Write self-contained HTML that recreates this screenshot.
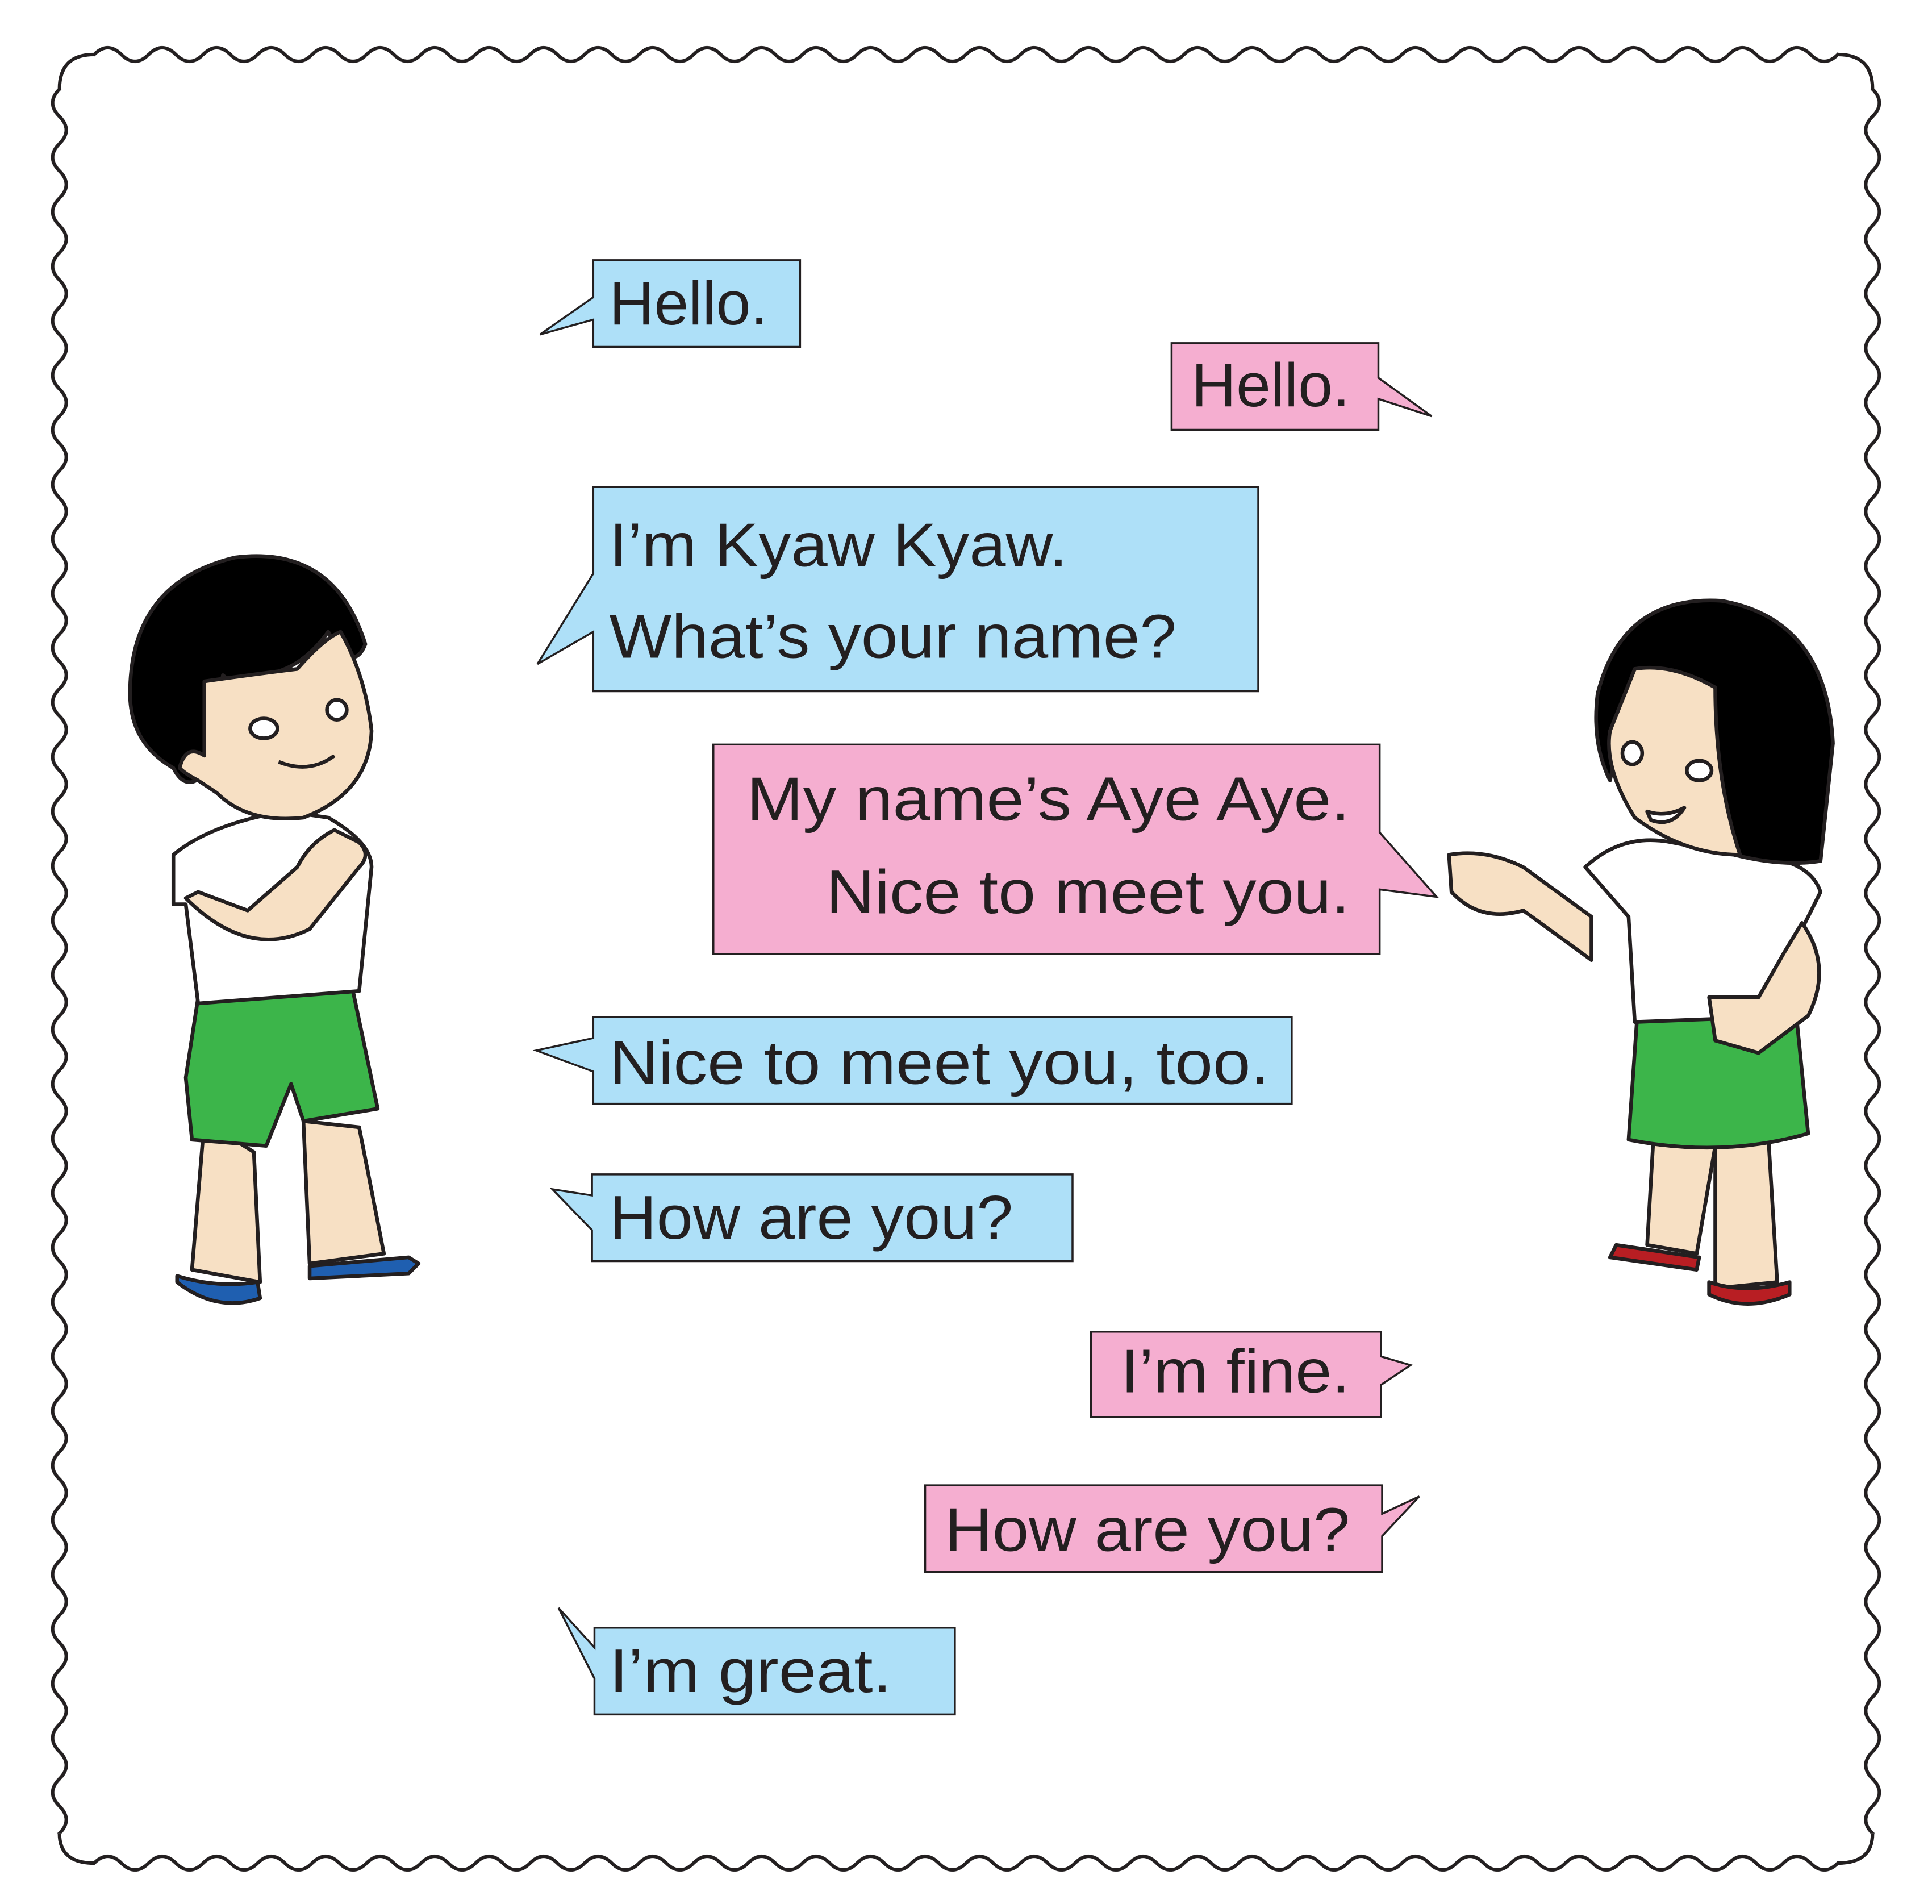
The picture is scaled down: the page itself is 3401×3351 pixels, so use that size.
<!DOCTYPE html>
<html><head><meta charset="utf-8"><style>
html,body{margin:0;padding:0;background:#fff}
svg{display:block}
text{font-family:"Liberation Sans",sans-serif;font-size:50px;fill:#231f20}
</style></head><body>
<svg width="3401" height="3351" viewBox="0 0 1560 1537" preserveAspectRatio="none" xmlns="http://www.w3.org/2000/svg">
<defs>
<pattern id="wh" patternUnits="userSpaceOnUse" x="76" y="34" width="44" height="20">
<path d="M-1,10.5 L0,10 q11,-11 22,0 t22,0 l1,0.5" fill="none" stroke="#231f20" stroke-width="2.8"/>
</pattern>
<pattern id="wl" patternUnits="userSpaceOnUse" x="38" y="72" width="20" height="44">
<path d="M10.5,-1 L10,0 q-11,11 0,22 t0,22 l0.5,1" fill="none" stroke="#231f20" stroke-width="2.8"/>
</pattern>
<pattern id="wr" patternUnits="userSpaceOnUse" x="1502" y="72" width="20" height="44">
<path d="M9.5,-1 L10,0 q11,11 0,22 t0,22 l-0.5,1" fill="none" stroke="#231f20" stroke-width="2.8"/>
</pattern>
</defs>
<rect width="1560" height="1537" fill="#fff"/>
<rect x="76" y="34" width="1408" height="20" fill="url(#wh)"/>
<rect x="76" y="1494" width="1408" height="20" fill="url(#wh)"/>
<rect x="38" y="72" width="20" height="1408" fill="url(#wl)"/>
<rect x="1502" y="72" width="20" height="1408" fill="url(#wr)"/>
<g fill="none" stroke="#231f20" stroke-width="2.8">
<path d="M48,72 Q48,44 76,44"/>
<path d="M1484,44 Q1512,44 1512,72"/>
<path d="M1512,1480 Q1512,1504 1484,1504"/>
<path d="M76,1504 Q48,1504 48,1480"/>
</g>

<g stroke="#231f20" stroke-width="1.6" stroke-linejoin="miter">
<polygon fill="#aee0f8" points="479,210 646,210 646,280 479,280 479,258 436,270 479,240"/>
<polygon fill="#f5aed0" points="946,277 1113,277 1113,305 1156,336 1113,322 1113,347 946,347"/>
<polygon fill="#aee0f8" points="479,393 1016,393 1016,558 479,558 479,510 434,536 479,463"/>
<polygon fill="#f5aed0" points="576,601 1114,601 1114,672 1160,724 1114,718 1114,770 576,770"/>
<polygon fill="#aee0f8" points="479,821 1043,821 1043,891 479,891 479,865 433,848 479,838"/>
<polygon fill="#aee0f8" points="478,948 866,948 866,1018 478,1018 478,993 446,960 478,965"/>
<polygon fill="#f5aed0" points="881,1075 1115,1075 1115,1095 1139,1102 1115,1118 1115,1144 881,1144"/>
<polygon fill="#f5aed0" points="747,1199 1116,1199 1116,1222 1146,1208 1116,1240 1116,1269 747,1269"/>
<polygon fill="#aee0f8" points="480,1314 771,1314 771,1384 480,1384 480,1355 451,1298 480,1330"/>
</g>

<g>
<text x="492" y="262" textLength="128" lengthAdjust="spacingAndGlyphs">Hello.</text>
<text x="962" y="328" textLength="128" lengthAdjust="spacingAndGlyphs">Hello.</text>
<text x="492" y="457" textLength="370" lengthAdjust="spacingAndGlyphs">I’m Kyaw Kyaw.</text>
<text x="492" y="531" textLength="458" lengthAdjust="spacingAndGlyphs">What’s your name?</text>
<text x="603" y="662" textLength="487" lengthAdjust="spacingAndGlyphs">My name’s Aye Aye.</text>
<text x="667" y="737" textLength="423" lengthAdjust="spacingAndGlyphs">Nice to meet you.</text>
<text x="492" y="875" textLength="533" lengthAdjust="spacingAndGlyphs">Nice to meet you, too.</text>
<text x="492" y="1000" textLength="326" lengthAdjust="spacingAndGlyphs">How are you?</text>
<text x="905" y="1124" textLength="185" lengthAdjust="spacingAndGlyphs">I’m fine.</text>
<text x="763" y="1252" textLength="327" lengthAdjust="spacingAndGlyphs">How are you?</text>
<text x="492" y="1366" textLength="228" lengthAdjust="spacingAndGlyphs">I’m great.</text>
</g>

<!-- Boy -->
<g stroke="#231f20" stroke-width="3" stroke-linejoin="round">
<path fill="#f7e0c4" d="M165,905 L155,1025 L210,1035 L205,930 Z"/>
<path fill="#f7e0c4" d="M245,905 L250,1020 L310,1012 L290,910 Z"/>
<path fill="#1f5fb0" d="M143,1035 Q175,1060 210,1048 L208,1035 Q175,1040 143,1030 Z"/>
<path fill="#1f5fb0" d="M250,1032 L330,1028 L338,1020 L330,1015 L250,1022 Z"/>
<path fill="#3cb54a" d="M160,805 L285,800 L305,895 L245,905 L235,875 L215,925 L155,920 L150,870 Z"/>
<path fill="#fff" d="M140,690 Q170,665 230,655 L265,660 Q300,680 300,700 L290,800 L160,810 L150,730 L140,730 Z"/>
<path fill="#f7e0c4" d="M150,725 Q200,775 250,750 L290,700 Q300,690 290,680 L270,670 Q250,680 240,700 L200,735 L160,720 Z"/>
<path fill="#000" d="M105,560 Q105,470 190,450 Q270,440 295,520 Q285,545 265,510 Q240,545 205,545 Q195,560 180,545 L165,625 Q150,640 140,620 Q105,600 105,560 Z"/>
<path fill="#f7e0c4" d="M165,550 Q200,545 240,540 Q262,515 275,510 Q295,545 300,590 Q298,640 245,660 Q200,665 175,640 L160,630 Q150,625 145,620 Q150,600 165,610 Z"/>
<ellipse cx="213" cy="588" rx="11" ry="8" fill="#fff"/>
<ellipse cx="272" cy="573" rx="8" ry="8" fill="#fff"/>
<path fill="none" d="M225,615 Q250,625 270,610"/>
</g>

<!-- Girl -->
<g stroke="#231f20" stroke-width="3" stroke-linejoin="round">
<path fill="#f7e0c4" d="M1335,920 L1330,1005 L1370,1012 L1385,925 Z"/>
<path fill="#f7e0c4" d="M1385,925 L1385,1040 L1435,1035 L1428,920 Z"/>
<path fill="#b81e23" d="M1300,1015 L1370,1025 L1372,1015 L1305,1005 Z"/>
<path fill="#b81e23" d="M1380,1045 Q1410,1060 1445,1045 L1445,1035 Q1410,1045 1380,1035 Z"/>
<path fill="#3cb54a" d="M1322,820 L1450,815 L1460,915 Q1390,935 1315,920 Z"/>
<path fill="#fff" d="M1280,700 Q1310,672 1350,680 L1400,690 Q1460,690 1470,720 L1455,750 L1450,820 L1320,825 L1315,740 Z"/>
<path fill="#f7e0c4" d="M1170,690 Q1200,685 1230,700 L1285,740 L1285,775 L1230,735 Q1195,745 1172,720 Z"/>
<path fill="#f7e0c4" d="M1455,745 Q1480,780 1460,820 L1420,850 L1385,840 L1380,805 L1420,805 L1440,770 Z"/>
<path fill="#000" d="M1290,560 Q1310,480 1390,485 Q1475,500 1480,600 L1470,695 Q1440,700 1400,690 Q1380,640 1385,560 Q1350,540 1320,540 L1300,630 Q1285,600 1290,560 Z"/>
<path fill="#f7e0c4" d="M1320,540 Q1350,535 1385,555 Q1385,630 1405,690 Q1360,690 1320,660 Q1295,620 1300,590 Z"/>
<ellipse cx="1318" cy="608" rx="8" ry="9" fill="#fff"/>
<ellipse cx="1372" cy="622" rx="10" ry="8" fill="#fff"/>
<path fill="#fff" d="M1330,655 Q1345,660 1360,652 Q1350,668 1333,662 Z"/>
</g>
</svg>
</body></html>
